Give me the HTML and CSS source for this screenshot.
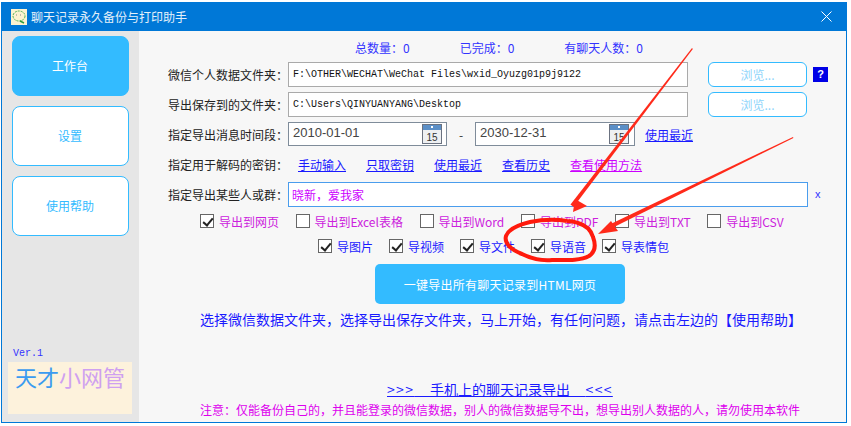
FILE: index.html
```html
<!DOCTYPE html>
<html lang="zh-CN">
<head>
    <meta charset="UTF-8">
    <title>聊天记录永久备份与打印助手</title>
    <link rel="stylesheet" href="styles.css">
</head>
<body>
    <div class="window">
        <div class="titlebar">
            <svg class="app_icon" width="16" height="16" viewBox="0 0 16 16">
                <rect width="16" height="16" fill="#fdf3d0"/>
                <ellipse cx="8" cy="7" rx="6" ry="5" fill="none" stroke="#4caf50" stroke-width="1" stroke-dasharray="2 1"/>
                <path d="M9 12l4 2" stroke="#2e9e3e" stroke-width="1.5"/>
                <path d="M5 6h1M9 6h1" stroke="#888" stroke-width="1"/>
            </svg>
            <span class="title_text">聊天记录永久备份与打印助手</span>
            <svg class="close_icon" width="11" height="11" viewBox="0 0 11 11">
                <path d="M0.5 0.5L10.5 10.5M10.5 0.5L0.5 10.5" stroke="#fff" stroke-width="1"/>
            </svg>
        </div>

        <div class="content">
            <div class="sidebar">
                <div class="side_btn side_active">工作台</div>
                <div class="side_btn">设置</div>
                <div class="side_btn">使用帮助</div>
                <div class="version">Ver.1</div>
                <div class="logo"><span class="logo_blue">天才</span><span class="logo_purple">小网管</span></div>
            </div>

            <div class="main">
                <div class="stats">
                    <span class="stat_a">总数量：0</span>
                    <span class="stat_b">已完成：0</span>
                    <span class="stat_c">有聊天人数：0</span>
                </div>

                <div class="row row_path">
                    <label class="label">微信个人数据文件夹：</label>
                    <input class="path_input" value="F:\OTHER\WECHAT\WeChat Files\wxid_Oyuzg01p9j9122">
                    <div class="browse">浏览...</div>
                    <div class="help_mark">?</div>
                </div>
                <div class="row row_path row_save">
                    <label class="label">导出保存到的文件夹：</label>
                    <input class="path_input" value="C:\Users\QINYUANYANG\Desktop">
                    <div class="browse">浏览...</div>
                </div>

                <div class="row row_date">
                    <label class="label">指定导出消息时间段：</label>
                    <div class="date_box">
                        <span class="date_text">2010-01-01</span>
                        <svg class="cal" width="20" height="20" viewBox="0 0 20 20">
                            <rect x="0.5" y="0.5" width="19" height="19" fill="#eef0f2" stroke="#6b7280"/>
                            <rect x="1" y="1" width="18" height="5" fill="#5b8fc7"/>
                            <rect x="9" y="2" width="2" height="2" fill="#fff"/>
                            <text x="10" y="16.5" class="cal_num">15</text>
                        </svg>
                    </div>
                    <span class="dash">-</span>
                    <div class="date_box date_two">
                        <span class="date_text">2030-12-31</span>
                        <svg class="cal" width="20" height="20" viewBox="0 0 20 20">
                            <rect x="0.5" y="0.5" width="19" height="19" fill="#eef0f2" stroke="#6b7280"/>
                            <rect x="1" y="1" width="18" height="5" fill="#5b8fc7"/>
                            <rect x="9" y="2" width="2" height="2" fill="#fff"/>
                            <text x="10" y="16.5" class="cal_num">15</text>
                        </svg>
                    </div>
                    <a class="link date_link" href="#">使用最近</a>
                </div>

                <div class="row row_key">
                    <label class="label">指定用于解码的密钥：</label>
                    <div class="key_links">
                        <a class="link" href="#">手动输入</a>
                        <a class="link" href="#">只取密钥</a>
                        <a class="link" href="#">使用最近</a>
                        <a class="link" href="#">查看历史</a>
                        <a class="link link_pink" href="#">查看使用方法</a>
                    </div>
                </div>

                <div class="row row_who">
                    <label class="label">指定导出某些人或群：</label>
                    <input class="who_input" value="晓新，爱我家">
                    <span class="clear_x">x</span>
                </div>

                <div class="checks checks_format">
                    <label class="check"><span class="box on"></span>导出到网页</label>
                    <label class="check"><span class="box"></span>导出到Excel表格</label>
                    <label class="check"><span class="box"></span>导出到Word</label>
                    <label class="check"><span class="box"></span>导出到PDF</label>
                    <label class="check"><span class="box"></span>导出到TXT</label>
                    <label class="check"><span class="box"></span>导出到CSV</label>
                </div>
                <div class="checks checks_media">
                    <label class="check"><span class="box on"></span>导图片</label>
                    <label class="check"><span class="box on"></span>导视频</label>
                    <label class="check"><span class="box on"></span>导文件</label>
                    <label class="check"><span class="box on"></span>导语音</label>
                    <label class="check"><span class="box on"></span>导表情包</label>
                </div>

                <div class="go_btn">一键导出所有聊天记录到HTML网页</div>
                <div class="hint">选择微信数据文件夹，选择导出保存文件夹，马上开始，有任何问题，请点击左边的【使用帮助】</div>
                <a class="phone_link" href="#"><span class="chevrons">&gt;&gt;&gt;</span>&nbsp;&nbsp;&nbsp;&nbsp;&nbsp;手机上的聊天记录导出&nbsp;&nbsp;&nbsp;&nbsp;&nbsp;<span class="chevrons">&lt;&lt;&lt;</span></a>
                <div class="notice">注意：仅能备份自己的，并且能登录的微信数据，别人的微信数据导不出，想导出别人数据的人，请勿使用本软件</div>
            </div>
        </div>
    </div>

    <!-- annotations drawn on top of the screenshot -->
    <svg class="marks" width="851" height="426" viewBox="0 0 851 426">
        <polygon points="692,48 692.8,49 573.5,207 570.5,204.5" fill="#ff2a1a"/>
        <polygon points="573,212 575,199 587,206" fill="#ff2a1a"/>
        <polygon points="793,137 793.4,138 609,229.5 606.5,226" fill="#ff2a1a"/>
        <polygon points="598,234 611,221 618,231" fill="#ff2a1a"/>
        <path d="M567 221C555 219 540 220 530 222C518 225 508 230 506 236C504 243 511 250 522 254C530 258 540 261 552 260C565 260 580 261 589 256C595 252 596 245 593 237C591 230 585 225 578 223C573 221 570 221 567 221" fill="none" stroke="#ff1a0d" stroke-width="4"/>
    </svg>
</body>
</html>
```

FILE: styles.css
```css
* {
    box-sizing: border-box;
}

body {
    margin: 0;
    background: #fff;
    font-family: "Noto Sans CJK SC", "Liberation Sans", sans-serif;
    font-size: 12px;
    overflow: hidden;
}

.window {
    width: 846px;
    height: 421px;
    margin: 2px 0 0 1px;
    border: 1px solid #0078d7;
    border-top: 0;
    display: flex;
    flex-direction: column;
}

.titlebar {
    height: 29px;
    flex: none;
    background: #0078d7;
    color: #e4f0fa;
    display: flex;
    align-items: center;
    padding: 0 14px 0 9px;
}

.app_icon {
    margin-right: 4px;
}

.close_icon {
    margin-left: auto;
}

.content {
    flex: 1;
    display: flex;
    min-height: 0;
}

/* colonne de gauche */
.sidebar {
    width: 137px;
    flex: none;
    background: #e6e6e6;
    padding: 5px 0 0 10px;
    display: flex;
    flex-direction: column;
}

.side_btn {
    width: 117px;
    height: 60px;
    margin-bottom: 10px;
    padding: 0 1px 1px 0;
    border: 1px solid #33bbff;
    border-radius: 8px;
    background: #fff;
    color: #33bbff;
    display: flex;
    align-items: center;
    justify-content: center;
}

.side_active {
    background: #33bbff;
    color: #fff;
}

.version {
    margin-top: auto;
    margin-left: 1px;
    font-family: "Liberation Mono", monospace;
    font-size: 10px;
    line-height: 12px;
    color: #3333ff;
}

.logo {
    width: 124px;
    height: 52px;
    margin: 2px 0 8px -4px;
    padding-left: 7px;
    background: #fdf2dc;
    font-size: 22px;
    line-height: 28px;
    white-space: nowrap;
}

.logo_blue {
    color: #3b9bf0;
}

.logo_purple {
    color: #cfa0f0;
}

/* zone principale */
.main {
    flex: 1;
    background: #f7f7f7;
    padding-left: 29px;
    display: flex;
    flex-direction: column;
    min-width: 0;
}

.stats {
    height: 31px;
    padding-top: 9px;
    line-height: 16px;
    color: #3333ff;
    display: flex;
}

.stat_a {
    margin-left: 187px;
}

.stat_b {
    margin-left: 50px;
}

.stat_c {
    margin-left: 50px;
}

.row {
    display: flex;
    align-items: center;
}

.label {
    width: 120px;
    flex: none;
    color: #222;
}

.row_path {
    height: 25px;
}

.row_save {
    margin-top: 5px;
}

.path_input {
    width: 400px;
    height: 25px;
    border: 1px solid #aaa;
    background: #fff;
    padding: 0 4px;
    font-family: "Liberation Mono", monospace;
    font-size: 10px;
    color: #111;
    outline: 0;
}

.browse {
    width: 99px;
    height: 25px;
    margin-left: 20px;
    border: 1px solid #33bbff;
    border-radius: 6px;
    background: #fff;
    color: #8fd4fb;
    display: flex;
    align-items: center;
    justify-content: center;
}

.help_mark {
    width: 15px;
    height: 15px;
    margin-left: 6px;
    background: #0000e6;
    color: #fff;
    font-family: "Liberation Sans", sans-serif;
    font-size: 11px;
    font-weight: bold;
    line-height: 15px;
    text-align: center;
}

.row_date {
    height: 24px;
    margin-top: 5px;
}

.date_box {
    width: 159px;
    height: 24px;
    border: 1px solid #7f8c9a;
    background: #fff;
    padding: 0 4px 0 4px;
    display: flex;
    align-items: center;
    justify-content: space-between;
    font-family: "Liberation Sans", sans-serif;
    font-size: 13px;
    color: #444;
}

.date_two {
    width: 160px;
    padding-right: 5px;
}

.date_text {
    padding-bottom: 3px;
}

.cal_num {
    font-family: "Liberation Sans", sans-serif;
    font-size: 10px;
    text-anchor: middle;
    fill: #333;
}

.dash {
    width: 28px;
    text-align: center;
    color: #333;
}

.link {
    color: #1a1aff;
    text-decoration: underline;
}

.link_pink {
    color: #cc00ff;
}

.date_link {
    margin-left: 10px;
}

.row_key {
    height: 18px;
    margin-top: 9px;
}

.key_links {
    margin-left: 10px;
    display: flex;
    gap: 20px;
}

.row_who {
    height: 24px;
    margin-top: 9px;
}

.who_input {
    width: 520px;
    height: 25px;
    border: 1px solid #4a9ded;
    background: #fff;
    padding: 0 3px;
    font-family: "Noto Sans CJK SC", sans-serif;
    font-size: 12px;
    color: #cc00ff;
    outline: 0;
}

.clear_x {
    margin-left: 7px;
    color: #3333ff;
    font-family: "Liberation Sans", sans-serif;
    font-size: 11px;
}

.checks {
    display: flex;
    height: 18px;
    align-items: center;
}

.checks_format {
    margin: 6px 0 0 32px;
    gap: 16.6px;
    color: #cc22dd;
}

.checks_media {
    margin: 7px 0 0 150px;
    gap: 16px;
    color: #1a1aff;
}

.check {
    display: flex;
    align-items: center;
    gap: 5px;
    white-space: nowrap;
}

.box {
    width: 14px;
    height: 14px;
    border: 1px solid #666;
    background: #fff;
    position: relative;
}

.box.on::after {
    content: "";
    position: absolute;
    left: 3.5px;
    top: 1px;
    width: 4px;
    height: 8px;
    border: solid #222;
    border-width: 0 2px 2px 0;
    transform: rotate(40deg);
}

.go_btn {
    width: 250px;
    height: 40px;
    margin: 9px 0 0 207px;
    flex: none;
    border-radius: 5px;
    background: #33bbff;
    color: #fff;
    font-size: 12px;
    letter-spacing: 0.25px;
    display: flex;
    align-items: center;
    justify-content: center;
}

.hint {
    margin: 6px 0 0 32px;
    color: #1a1aff;
    font-size: 14px;
    line-height: 18px;
    white-space: nowrap;
}

.phone_link {
    margin: 52px 0 0 219px;
    color: #1a1aff;
    font-size: 14px;
    line-height: 18px;
    white-space: nowrap;
    align-self: flex-start;
}

.chevrons {
    letter-spacing: 1.3px;
}

.notice {
    margin: 4px 0 0 32px;
    color: #dd00ee;
    line-height: 16px;
    white-space: nowrap;
}

/* flèches et cercle rouges */
.marks {
    position: absolute;
    left: 0;
    top: 0;
    pointer-events: none;
}
```
